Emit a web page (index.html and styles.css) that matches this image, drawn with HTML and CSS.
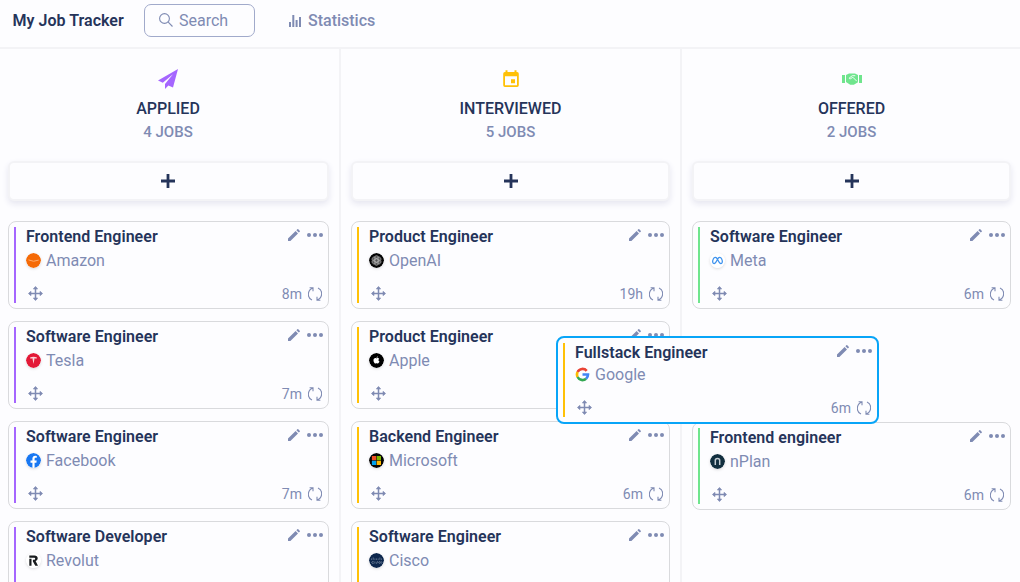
FILE: index.html
```html
<!DOCTYPE html>
<html lang="en">
<head>
<meta charset="utf-8">
<title>My Job Tracker</title>
<link rel="stylesheet" href="styles.css">
</head>
<body>
<svg class="sprite" aria-hidden="true">
  <symbol id="pencil" viewBox="0 0 12 12"><path fill="currentColor" d="M0 9.6 7.6 2l2.4 2.4L2.4 12H0zM8.4 1.2 9.3.3q.5-.5 1 0l1.4 1.4q.5.5 0 1l-.9.9z"/></symbol>
  <symbol id="dots" viewBox="0 0 16 4"><g fill="currentColor"><circle cx="2" cy="2" r="2"/><circle cx="8" cy="2" r="2"/><circle cx="14" cy="2" r="2"/></g></symbol>
  <symbol id="move" viewBox="0 0 15 15"><path fill="none" stroke="currentColor" stroke-width="1.5" d="M7.5 1v13M1 7.500h13"/><path fill="currentColor" stroke="currentColor" stroke-width=".6" stroke-linejoin="round" d="M7.500.4 9.700 3H5.300zM7.500 14.600 5.300 12h4.400zM.4 7.500 3 5.300v4.400zM14.600 7.500 12 9.700V5.300z"/></symbol>
  <symbol id="refresh" viewBox="0 0 14 14"><g fill="none" stroke="currentColor" stroke-width="1.1"><path d="M4 13A6.400 6.400 0 0 1 4.600 1.200M1.600.8h3.400v3.400M10 1A6.400 6.400 0 0 1 9.400 12.800M12.400 13.200H9V9.800"/></g></symbol>
  <symbol id="plus" viewBox="0 0 14 14"><path fill="none" stroke="currentColor" stroke-width="2.8" d="M7 0v14M0 7h14"/></symbol>
</svg>

<header class="topbar">
  <h1 class="brand">My Job Tracker</h1>
  <div class="search">
    <svg class="search-icon" viewBox="0 0 14 14"><circle cx="5.5" cy="5.5" r="4.9"/><path d="m9.2 9.2 4.3 4.3"/></svg>
    <span>Search</span>
  </div>
  <a class="stats">
    <svg class="stats-icon" viewBox="0 0 12 12"><path fill="currentColor" d="M0 7h2v5H0zM3.3 0h2v12h-2zM6.6 5h2v7h-2zM10 2h2v10h-2z"/></svg>
    <span>Statistics</span>
  </a>
</header>

<main class="board">
  <section class="column applied">
    <div class="column-head">
      <svg class="column-icon" viewBox="0 0 20 20"><path fill="currentColor" d="M20 0 0 11.5l4.8 2.2L15 5.3 7 14.9V20l3.4-3.6 4.6 2z"/></svg>
      <h2>APPLIED</h2>
      <p>4 JOBS</p>
    </div>
    <button class="add"><svg><use href="#plus"/></svg></button>
    <div class="cards">
      <article class="card">
        <div class="info"><h3>Frontend Engineer</h3>
          <div class="company"><svg class="logo" viewBox="0 0 15 15"><circle cx="7.5" cy="7.5" r="7.5" fill="#f56a07"/><path d="M2.5 6.9q5 2.6 10.2.2" fill="none" stroke="#ffb47b" stroke-width=".9"/></svg><span>Amazon</span></div>
          <svg class="move"><use href="#move"/></svg></div>
        <div class="side"><div class="actions"><svg class="pencil"><use href="#pencil"/></svg><svg class="dots"><use href="#dots"/></svg></div>
          <div class="age">8m<svg class="refresh"><use href="#refresh"/></svg></div></div>
      </article>
      <article class="card">
        <div class="info"><h3>Software Engineer</h3>
          <div class="company"><svg class="logo" viewBox="0 0 15 15"><circle cx="7.5" cy="7.5" r="7.5" fill="#e31937"/><path d="M4 4.4q3.500-1.100 7 0l-.6 1.300-1.800-.4L7.500 11 6.400 5.300l-1.800.4z" fill="#fbd5da"/></svg><span>Tesla</span></div>
          <svg class="move"><use href="#move"/></svg></div>
        <div class="side"><div class="actions"><svg class="pencil"><use href="#pencil"/></svg><svg class="dots"><use href="#dots"/></svg></div>
          <div class="age">7m<svg class="refresh"><use href="#refresh"/></svg></div></div>
      </article>
      <article class="card">
        <div class="info"><h3>Software Engineer</h3>
          <div class="company"><svg class="logo" viewBox="0 0 15 15"><circle cx="7.5" cy="7.5" r="7.5" fill="#1877f2"/><path d="M6.4 15V9.7H4.5V7.5h1.9V5.8c0-1.9 1.1-3 2.9-3l1.500.1v1.900h-1c-.9 0-1.200.5-1.200 1.200v1.500h2.100l-.3 2.200H8.600V15z" fill="#fff"/></svg><span>Facebook</span></div>
          <svg class="move"><use href="#move"/></svg></div>
        <div class="side"><div class="actions"><svg class="pencil"><use href="#pencil"/></svg><svg class="dots"><use href="#dots"/></svg></div>
          <div class="age">7m<svg class="refresh"><use href="#refresh"/></svg></div></div>
      </article>
      <article class="card">
        <div class="info"><h3>Software Developer</h3>
          <div class="company"><svg class="logo" viewBox="0 0 15 15"><circle cx="7.5" cy="7.5" r="7.5" fill="#fff"/><path d="M3.300 2.500h5.200c4 0 4.200 4.600 1.100 5.500l2.400 4.700H9.300L6.900 8.400V6.800h1.400c1.200 0 1.200-2.100 0-2.100h-5zM3.300 5.700h2.200v7H3.300z" fill="#191c1f"/></svg><span>Revolut</span></div></div>
        <div class="side"><div class="actions"><svg class="pencil"><use href="#pencil"/></svg><svg class="dots"><use href="#dots"/></svg></div></div>
      </article>
    </div>
  </section>

  <section class="column interviewed">
    <div class="column-head">
      <svg class="column-icon" viewBox="0 0 20 20"><path fill="currentColor" fill-rule="evenodd" d="M4.500 1.300h2V3h7V1.300h2V3h.6q1.700 0 1.700 1.700v11.600q0 1.700-1.700 1.700H3.900q-1.700 0-1.700-1.700V4.700q0-1.700 1.700-1.700h.6zM4 7.300v9h12v-9zM10 10.300h4v4h-4z"/></svg>
      <h2>INTERVIEWED</h2>
      <p>5 JOBS</p>
    </div>
    <button class="add"><svg><use href="#plus"/></svg></button>
    <div class="cards">
      <article class="card">
        <div class="info"><h3>Product Engineer</h3>
          <div class="company"><svg class="logo" viewBox="0 0 15 15"><circle cx="7.5" cy="7.5" r="7.5" fill="#050505"/><circle cx="7.500" cy="7.500" r="4.700" fill="#555"/><g fill="none" stroke="#a5a5a5" stroke-width=".65"><rect x="5.700" y="2.600" width="3.600" height="6.800" rx="1.800"/><rect x="5.700" y="2.600" width="3.600" height="6.800" rx="1.800" transform="rotate(60 7.500 7.500)"/><rect x="5.700" y="2.600" width="3.600" height="6.800" rx="1.800" transform="rotate(120 7.500 7.500)"/><rect x="5.700" y="2.600" width="3.600" height="6.800" rx="1.800" transform="rotate(180 7.500 7.500)"/><rect x="5.700" y="2.600" width="3.600" height="6.800" rx="1.800" transform="rotate(240 7.500 7.500)"/><rect x="5.700" y="2.600" width="3.600" height="6.800" rx="1.800" transform="rotate(300 7.500 7.500)"/></g></svg><span>OpenAI</span></div>
          <svg class="move"><use href="#move"/></svg></div>
        <div class="side"><div class="actions"><svg class="pencil"><use href="#pencil"/></svg><svg class="dots"><use href="#dots"/></svg></div>
          <div class="age">19h<svg class="refresh"><use href="#refresh"/></svg></div></div>
      </article>
      <article class="card">
        <div class="info"><h3>Product Engineer</h3>
          <div class="company"><svg class="logo" viewBox="0 0 15 15"><circle cx="7.5" cy="7.5" r="7.5" fill="#000"/><path d="M7.600 5.400c1-.6 2-.5 2.600.3-1.100.8-.9 2.300.3 2.900-.5 1.300-1.200 2.200-2.100 1.800-.6-.3-1-.3-1.600 0-1.300.5-2.500-1.900-2.300-3.500.2-1.400 1.600-2.300 3.100-1.500M7.500 5q0-1.400 1.400-1.800Q8.900 4.600 7.500 5" fill="#fff"/></svg><span>Apple</span></div>
          <svg class="move"><use href="#move"/></svg></div>
        <div class="side"><div class="actions"><svg class="pencil"><use href="#pencil"/></svg><svg class="dots"><use href="#dots"/></svg></div></div>
      </article>
      <article class="card">
        <div class="info"><h3>Backend Engineer</h3>
          <div class="company"><svg class="logo" viewBox="0 0 15 15"><circle cx="7.5" cy="7.5" r="7.5" fill="#050505"/><path d="M2.900 2.900h4.300v4.300H2.900z" fill="#f04e24"/><path d="M7.700 2.900H12v4.300H7.700z" fill="#7db700"/><path d="M2.900 7.700h4.300V12H2.900z" fill="#00a1ed"/><path d="M7.700 7.700H12V12H7.700z" fill="#fdb700"/></svg><span>Microsoft</span></div>
          <svg class="move"><use href="#move"/></svg></div>
        <div class="side"><div class="actions"><svg class="pencil"><use href="#pencil"/></svg><svg class="dots"><use href="#dots"/></svg></div>
          <div class="age">6m<svg class="refresh"><use href="#refresh"/></svg></div></div>
      </article>
      <article class="card">
        <div class="info"><h3>Software Engineer</h3>
          <div class="company"><svg class="logo" viewBox="0 0 15 15"><circle cx="7.5" cy="7.5" r="7.5" fill="#0d274d"/><path d="M2.500 5.500v1.300M4.200 4.500v2.300M5.900 5.500v1.300M7.500 5.500v1.300M9.200 5.500v1.300M10.900 4.500v2.300M12.500 5.500v1.300" stroke="#8192a9" stroke-width=".7"/><path d="M4.700 8.700q-2-.4-2 .8t2 .8M5.900 8.500v2M9 8.700q-1.700 0-1 .8t-.9.900M11.100 8.700q-1.500-.2-1.500.8t1.500.8" fill="none" stroke="#8192a9" stroke-width=".7"/><circle cx="12.200" cy="9.500" r=".8" fill="none" stroke="#8192a9" stroke-width=".6"/></svg><span>Cisco</span></div></div>
        <div class="side"><div class="actions"><svg class="pencil"><use href="#pencil"/></svg><svg class="dots"><use href="#dots"/></svg></div></div>
      </article>
    </div>
  </section>

  <section class="column offered">
    <div class="column-head">
      <svg class="column-icon" viewBox="0 0 20 20"><path fill="currentColor" d="M0 6h3v8H0zM17 6h3v8h-3zM4 6l3-1.600h6L16 6v7.200l-4.200 2.600H8.200L4 13z"/><path d="m14.800 12.200-4-4-2.200 1.500q-1.300.4-1.500-.6l3.200-2.400h3" fill="none" stroke="#fdfdff" stroke-width=".9"/></svg>
      <h2>OFFERED</h2>
      <p>2 JOBS</p>
    </div>
    <button class="add"><svg><use href="#plus"/></svg></button>
    <div class="cards">
      <article class="card">
        <div class="info"><h3>Software Engineer</h3>
          <div class="company"><svg class="logo" viewBox="0 0 15 15"><circle cx="7.5" cy="7.5" r="7.5" fill="#fff"/><path d="M7.500 6.500C6.300 4.200 4.400 3.900 3.300 6.300c-1.300 2.800-.4 4.500.8 4.500 1.500 0 2.400-2.300 3.400-4.300 1.200-2.300 3.100-2.600 4.200-.2 1.300 2.800.4 4.500-.8 4.500-1.500 0-2.400-2.300-3.400-4.300" fill="none" stroke="#3f93ee" stroke-width="1.250" transform="translate(0 -.3)"/></svg><span>Meta</span></div>
          <svg class="move"><use href="#move"/></svg></div>
        <div class="side"><div class="actions"><svg class="pencil"><use href="#pencil"/></svg><svg class="dots"><use href="#dots"/></svg></div>
          <div class="age">6m<svg class="refresh"><use href="#refresh"/></svg></div></div>
      </article>
      <article class="card after-gap">
        <div class="info"><h3>Frontend engineer</h3>
          <div class="company"><svg class="logo" viewBox="0 0 15 15"><circle cx="7.5" cy="7.5" r="7.5" fill="#122f3f"/><path d="M5.300 11V6.600Q5.300 4.600 7.500 4.600t2.200 2V11" fill="none" stroke="#c3ccd2" stroke-width="1.500"/></svg><span>nPlan</span></div>
          <svg class="move"><use href="#move"/></svg></div>
        <div class="side"><div class="actions"><svg class="pencil"><use href="#pencil"/></svg><svg class="dots"><use href="#dots"/></svg></div>
          <div class="age">6m<svg class="refresh"><use href="#refresh"/></svg></div></div>
      </article>
    </div>
  </section>
</main>

<article class="card dragging interviewed">
  <div class="info"><h3>Fullstack Engineer</h3>
    <div class="company"><svg class="logo" viewBox="0 0 15 15"><g fill="none" stroke-width="2.700"><path d="M11.700 3.900A5.500 5.500 0 0 0 2.600 5" stroke="#ea4335"/><path d="M2.600 5a5.500 5.500 0 0 0 0 5" stroke="#fbbc05"/><path d="M2.600 10a5.500 5.500 0 0 0 8.500 1.700" stroke="#34a853"/><path d="M11.100 11.700A5.500 5.500 0 0 0 13 7.500H7.500" stroke="#4285f4"/></g></svg><span>Google</span></div>
    <svg class="move"><use href="#move"/></svg></div>
  <div class="side"><div class="actions"><svg class="pencil"><use href="#pencil"/></svg><svg class="dots"><use href="#dots"/></svg></div>
    <div class="age">6m<svg class="refresh"><use href="#refresh"/></svg></div></div>
</article>
</body>
</html>
```

FILE: styles.css
```css
* { box-sizing: border-box; }
body {
  margin: 0;
  height: 582px;
  overflow: hidden;
  display: flex;
  flex-direction: column;
  background: #fdfdff;
  color: #25345a;
  font: 16px/20px Roboto, sans-serif;
}
h1, h2, h3, p { margin: 0; font-size: 16px; font-weight: 500; }
svg { display: block; flex: none; }
.sprite { position: absolute; width: 0; height: 0; }

.topbar {
  flex: none;
  height: 49px;
  padding: 0 12px 7px;
  border-bottom: 2px solid #f3f3f6;
  display: flex;
  align-items: center;
  color: #7f8bb3;
}
.topbar span, .brand { padding-top: 2px; }
.brand { width: 132px; padding-left: .5px; color: #25345a; font-weight: 600; letter-spacing: .03px; }
.search {
  width: 111px;
  height: 33px;
  padding-left: 14px;
  border: 1px solid #a1aacb;
  border-radius: 7px;
  display: flex;
  align-items: center;
  gap: 6px;
}
.search-icon { width: 14px; height: 14px; fill: none; stroke: #7f8bb3; stroke-width: 1.1; }
.stats { display: flex; align-items: center; gap: 7px; margin-left: 34px; font-weight: 500; }
.stats-icon { width: 12px; height: 12px; margin-top: 1px; }

.board { flex: 1; min-height: 0; display: grid; grid-template-columns: 341px 341px 338px; }
.column { padding: 0 10px; border-right: 2px solid #f3f3f6; display: flex; flex-direction: column; }
.applied { padding-left: 8px; --accent: #a566ff; }
.interviewed { --accent: #ffc107; }
.offered { --accent: #6fe58d; border-right: 0; padding-right: 9px; }
.column-head { height: 112px; padding-top: 20px; display: flex; flex-direction: column; align-items: center; }
.applied .column-head, .applied .add { padding-right: 1px; }
.column-icon { width: 20px; height: 20px; color: var(--accent); }
.column-head h2 { margin-top: 10px; }
.column-head p { margin-top: 3px; font-size: 15px; color: #7f8bb3; }
.add {
  flex: none;
  height: 40px;
  padding: 0;
  border: 2px solid #f3f3f6;
  border-radius: 6px;
  background: #fdfdff;
  box-shadow: 0 3px 6px #e6e6f0;
  display: flex;
  align-items: center;
  justify-content: center;
  color: #25345a;
}
.add svg { width: 14px; height: 14px; }

.cards { margin-top: 20px; display: flex; flex-direction: column; gap: 12px; }
.card {
  flex: none;
  height: 88px;
  padding: 5px 4px;
  padding-left: 5px;
  border: 1px solid #d9dadd;
  border-radius: 8px;
  background: #fdfdff;
  display: flex;
  justify-content: space-between;
}
.after-gap { margin-top: 101px; }
.info { padding-left: 10px; border-left: 2px solid var(--accent); display: flex; flex-direction: column; }
.card h3 { font-weight: 600; letter-spacing: .03px; }
.company { height: 20px; margin-top: 3px; display: flex; align-items: center; gap: 5px; color: #7f8bb3; }
.company span { padding-top: 2px; }
.logo { width: 15px; height: 15px; border-radius: 50%; box-shadow: 0 1px 3px #00000022; }
.move { width: 15px; height: 15px; margin: auto 0 2px 1.5px; color: #7f8bb3; }
.side { display: flex; flex-direction: column; justify-content: space-between; align-items: flex-end; color: #7f8bb3; }
.actions { display: flex; align-items: center; gap: 7px; padding: 2px 1px 0 0; }
.pencil { width: 12px; height: 12px; }
.dots { width: 16px; height: 4px; }
.age { display: flex; align-items: center; gap: 6px; font-size: 14px; line-height: 18px; padding-right: 2px; }
.refresh { width: 14px; height: 14px; }

.dragging {
  position: absolute;
  left: 556px;
  top: 336px;
  width: 323px;
  border: 2px solid #08a5f8;
}
.dragging h3 { line-height: 19px; }
.dragging .company { margin-top: 2px; }
.dragging .logo { box-shadow: none; }
```
